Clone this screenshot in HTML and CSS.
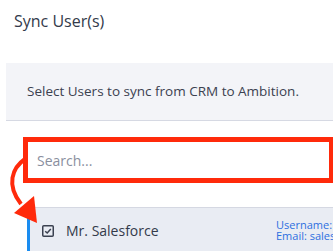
FILE: index.html
```html
<!DOCTYPE html>
<html lang="en">
<head>
    <meta charset="UTF-8">
    <title>Sync User(s)</title>
    <link rel="stylesheet" href="styles.css">
</head>
<body>

<!--标题-->
<div class="title">Sync User(s)</div>

<!--说明-->
<div class="intro">Select Users to sync from CRM to Ambition.</div>

<!--搜索框-->
<div class="search-row">
    <input class="search" type="text" placeholder="Search...">
</div>

<!--用户列表-->
<ul class="user-list">
    <li class="user-item">
        <span class="check">
            <svg width="12" height="12" viewBox="0 0 12 12">
                <rect x="0.75" y="0.75" width="10.5" height="10.5" rx="1" fill="none" stroke="#3b4150" stroke-width="1.5"/>
                <path d="M3.2 6.2 L5.2 8 L8.8 4" fill="none" stroke="#3b4150" stroke-width="1.5"/>
            </svg>
        </span>
        <span class="user-name">Mr. Salesforce</span>
        <span class="user-info">
            <span>Username: salesforce</span>
            <span>Email: salesforce@example.com</span>
        </span>
    </li>
</ul>

<!--红色箭头标注-->
<svg class="arrow" width="60" height="90" viewBox="0 0 60 90">
    <path d="M25 4 C12 13, 6 30, 21 49" fill="none" stroke="#ff2a0b" stroke-width="4"/>
    <polygon points="14,58 34,41 37,68" fill="#ff2a0b"/>
</svg>

</body>
</html>
```

FILE: styles.css
```css
* {
    margin: 0;
    padding: 0;
    box-sizing: border-box;
}

body {
    font-family: "Open Sans", "Noto Sans", sans-serif;
    background-color: #fff;
    color: #333a4a;
    position: relative;
    height: 251px;
    overflow: hidden;
}

/*标题*/
.title {
    font-size: 16px;
    line-height: 20px;
    padding: 11px 0 0 14px;
    height: 63px;
}

/*说明面板*/
.intro {
    margin-left: 6px;
    height: 58px;
    background-color: #f3f4f8;
    border-bottom: 1px solid #d6d9e3;
    font-size: 13.5px;
    line-height: 57px;
    padding-left: 21px;
    color: #3b4150;
}

/*搜索框*/
.search-row {
    padding: 16px 0 0 23px;
}

.search {
    display: block;
    width: 310px;
    height: 46px;
    border: 5px solid #ff2a0b;
    border-right-width: 4px;
    outline: none;
    padding-left: 9px;
    font-family: inherit;
    font-size: 14px;
    color: #333a4a;
}

.search::placeholder {
    color: #8a8f9e;
}

/*用户列表*/
.user-list {
    list-style: none;
    margin: 24px 0 0 27px;
}

.user-item {
    display: flex;
    align-items: center;
    height: 50px;
    background-color: #e9ecf3;
    border-top: 1px solid #d5d8e2;
    border-left: 3px solid #1a8cf0;
    padding-left: 12px;
    white-space: nowrap;
    overflow: hidden;
}

.check {
    display: flex;
    flex-shrink: 0;
    width: 12px;
    height: 12px;
    margin-top: -4px;
}

.user-name {
    flex-shrink: 0;
    font-size: 14px;
    margin: -4px 0 0 12px;
    color: #333a4a;
    width: 210px;
}

.user-info {
    display: flex;
    flex-shrink: 0;
    flex-direction: column;
    font-size: 11px;
    line-height: 11px;
    color: #2d6fe0;
    margin-top: -6px;
}

/*箭头*/
.arrow {
    position: absolute;
    left: 0;
    top: 155px;
}
```
